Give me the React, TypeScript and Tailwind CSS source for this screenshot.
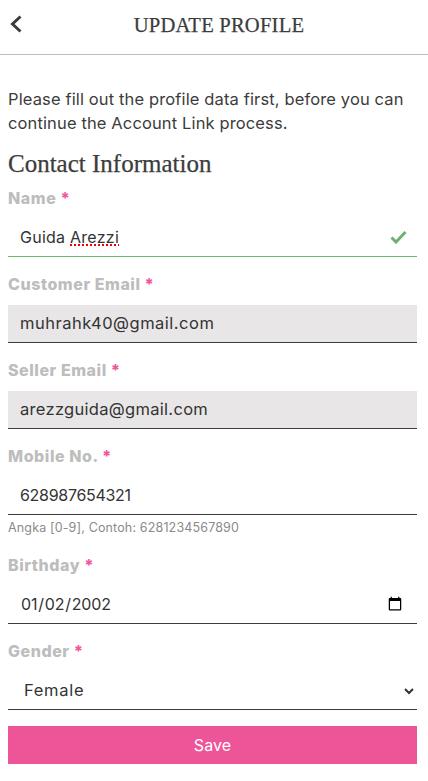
import * as React from "react";

const sans = "font-['Inter','Noto_Sans',sans-serif]";
const serif = "font-['Liberation_Serif','DejaVu_Serif',serif] [-webkit-text-stroke:0.25px_#3c3c3c]";

function Label({ children }: { children: React.ReactNode }) {
    return (
        <div className="h-[20px] text-[16px] leading-[20px] font-extrabold tracking-[0.55px] text-[#bdbdbd]">
            {children} <span className="text-[#f0569a]">*</span>
        </div>
    );
}

function Field({ label, value, gray, hint, tracking }: { label: string; value: string; gray?: boolean; hint?: string; tracking: string }) {
    return (
        <div>
            <Label>{label}</Label>
            <input
                readOnly
                value={value}
                className={`mt-[11px] block h-[38px] w-full border-b border-[#3c3c3c] px-3 pb-[1px] text-[#333] outline-none ${tracking} ${gray ? "bg-[#e8e6e7]" : "bg-white"}`}
            />
            {hint && <div className="mt-[6px] h-[14px] text-[12.5px] leading-[14px] tracking-[0.15px] text-[#8a8a8a]">{hint}</div>}
        </div>
    );
}

export default function App() {
    return (
        <div className={`h-[781px] w-[428px] overflow-hidden bg-white ${sans}`}>
            <header className="relative flex h-[55px] items-center justify-center border-b border-[#bdbdbd] pb-[3px] pl-[10px]">
                <svg className="absolute left-[9px] top-[14px] h-[20px] w-[14px]" viewBox="0 0 14 20" fill="none">
                    <path d="M11.5 2.5 3.5 10l8 7.5" stroke="#3c3c3c" strokeWidth="3" strokeLinejoin="miter" />
                </svg>
                <h1 className={`text-[20.6px] tracking-[0.2px] text-[#3c3c3c] ${serif}`}>UPDATE PROFILE</h1>
            </header>

            <main className="pl-2 pr-[11px] pt-[32px]">
                <p className="mr-[-3px] text-[16.5px] leading-[24px] tracking-[0.13px] text-[#3c3c3c]">
                    Please fill out the profile data first, before you can continue the Account Link process.
                </p>
                <h2 className={`mt-[13px] h-[32px] text-[25px] leading-[32px] text-[#3c3c3c] ${serif}`}>Contact Information</h2>

                <div className="mt-[8px]">
                    <Label>Name</Label>
                    <div className="mt-[11px] flex h-[38px] items-center justify-between border-b border-[#6fb56f] pb-[2px] pl-3 pr-[10px] text-[16px] tracking-[0.25px] text-[#333]">
                        <span>
                            Guida{" "}
                            <span className="underline decoration-[#f00000] decoration-dotted decoration-2 underline-offset-2">Arezzi</span>
                        </span>
                        <svg className="h-[14px] w-[17px]" viewBox="0 0 17 14" fill="none">
                            <path d="M1.5 7.5 6 12 15.5 2" stroke="#6fb06f" strokeWidth="3" />
                        </svg>
                    </div>
                </div>

                <div className="mt-[17px] flex flex-col gap-[17px]">
                    <Field label="Customer Email" value="muhrahk40@gmail.com" gray tracking="text-[16.5px] tracking-[0.5px]" />
                    <Field label="Seller Email" value="arezzguida@gmail.com" gray tracking="text-[16.5px] tracking-[0.3px]" />
                    <Field label="Mobile No." value="628987654321" hint="Angka [0-9], Contoh: 6281234567890" tracking="text-[16px] tracking-[-0.3px]" />
                    <div className="mt-[3px]">
                        <Label>Birthday</Label>
                        <input
                            type="date"
                            defaultValue="2002-01-02"
                            className="mt-[11px] block h-[38px] w-full border-b border-[#3c3c3c] bg-white px-3 pb-[1px] text-[16px] tracking-[-0.2px] text-[#333] outline-none"
                        />
                    </div>
                    <div>
                        <Label>Gender</Label>
                        <select
                            defaultValue="Female"
                            className="mt-[11px] block h-[38px] w-full border-b border-[#3c3c3c] bg-white pb-[1px] pl-3 text-[16.5px] tracking-[0.7px] text-[#333] outline-none"
                        >
                            <option>Female</option>
                            <option>Male</option>
                        </select>
                    </div>
                </div>

                <button className="mt-[16px] block h-[38px] w-full bg-[#ee5598] pb-[1px] text-[16px] tracking-[0.1px] text-white">Save</button>
            </main>
        </div>
    );
}
